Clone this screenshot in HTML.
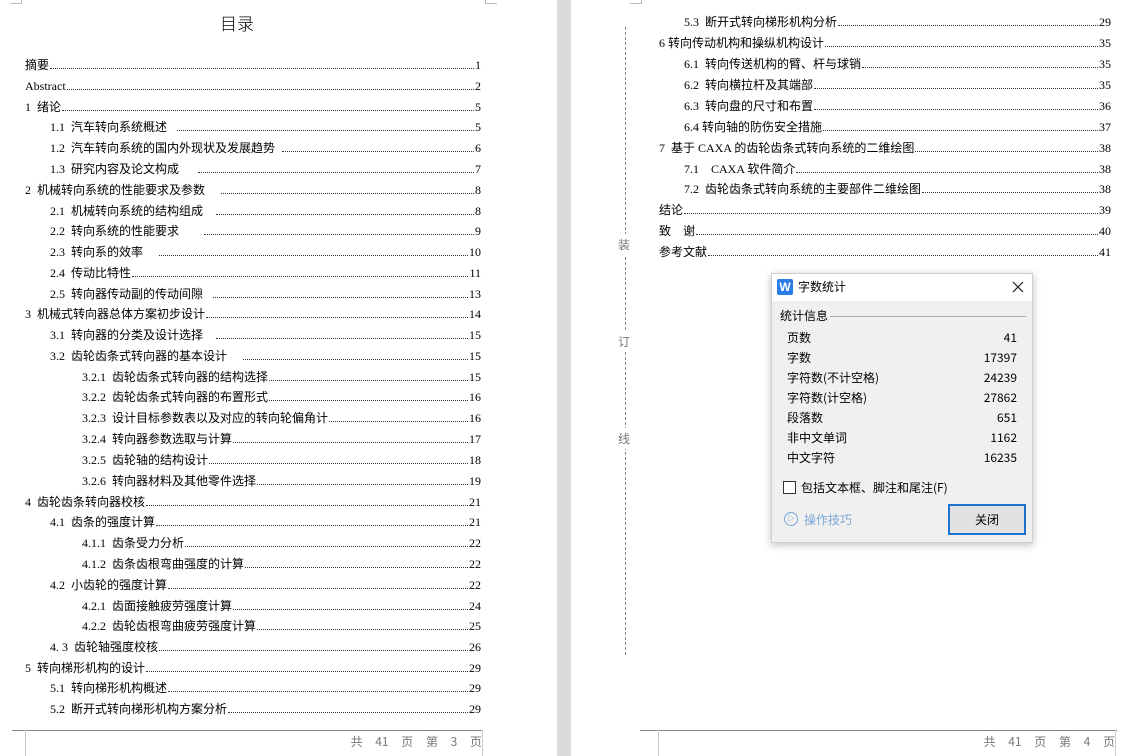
<!DOCTYPE html>
<html><head><meta charset="utf-8"><style>
*{margin:0;padding:0;box-sizing:border-box}
body{width:1131px;height:756px;background:#fff;position:relative;overflow:hidden;font-family:"Liberation Serif","Noto Sans CJK SC",serif;font-size:12px;color:#000}
.gap{position:absolute;left:557px;top:0;width:14px;height:756px;background:#dadbdc}
.r{position:absolute;display:flex;align-items:flex-end;height:16px;line-height:16px;white-space:nowrap}
.r .t{font-family:"Liberation Serif","Noto Sans CJK SC",sans-serif}
.r .d{flex:1;border-bottom:1px dotted #333;margin:0 1px 4px 1px}
.r .n{font-family:"Liberation Serif",serif}
.title{position:absolute;left:220px;top:10px;font-family:"Noto Sans CJK SC",sans-serif;font-size:17px;font-weight:300}
.foot{position:absolute;top:730px;height:1px;background:#888}
.ft{position:absolute;top:733px;font-family:"Noto Sans CJK SC",sans-serif;font-size:12px;color:#777;word-spacing:10px;text-align:right}
.cm{position:absolute;border-color:#bbb;border-style:solid;width:12px;height:5px}
.dash{position:absolute;left:625px;top:27px;height:628px;border-left:1px dashed #888}
.bl{position:absolute;left:618px;font-family:"Noto Sans CJK SC",sans-serif;font-size:12px;color:#777;background:#fff;padding:2px 0}
.dlg{position:absolute;left:771px;top:273px;width:262px;height:270px;background:#f0f0f0;border:1px solid #cfcfcf;box-shadow:0 2px 8px rgba(0,0,0,.25);font-family:"Noto Sans CJK SC",sans-serif;font-size:12px}
.tb{height:27px;background:#fff;position:relative}
.row{position:absolute;left:15px;width:230px;display:flex;justify-content:space-between;font-size:12px;line-height:16px}
</style></head><body>
<div class="gap"></div>
<div class="cm" style="left:10px;top:-1px;border-width:0 1px 1px 0"></div>
<div class="cm" style="left:485px;top:-1px;border-width:0 0 1px 1px"></div>
<div class="cm" style="left:630px;top:-1px;border-width:0 1px 1px 0"></div>
<div class="title">目录</div>

<div class="r" style="left:25px;width:456px;top:57px"><span class="t">摘要</span><span class="d"></span><span class="n">1</span></div>
<div class="r" style="left:25px;width:456px;top:78px"><span class="t">Abstract</span><span class="d"></span><span class="n">2</span></div>
<div class="r" style="left:25px;width:456px;top:99px"><span class="t">1&nbsp; 绪论</span><span class="d"></span><span class="n">5</span></div>
<div class="r" style="left:50px;width:431px;top:119px"><span class="t">1.1&nbsp; 汽车转向系统概述&nbsp;&nbsp;&nbsp;</span><span class="d"></span><span class="n">5</span></div>
<div class="r" style="left:50px;width:431px;top:140px"><span class="t">1.2&nbsp; 汽车转向系统的国内外现状及发展趋势&nbsp;&nbsp;</span><span class="d"></span><span class="n">6</span></div>
<div class="r" style="left:50px;width:431px;top:161px"><span class="t">1.3&nbsp; 研究内容及论文构成&nbsp;&nbsp;&nbsp;&nbsp;&nbsp;&nbsp;</span><span class="d"></span><span class="n">7</span></div>
<div class="r" style="left:25px;width:456px;top:182px"><span class="t">2&nbsp; 机械转向系统的性能要求及参数&nbsp;&nbsp;&nbsp;&nbsp;&nbsp;</span><span class="d"></span><span class="n">8</span></div>
<div class="r" style="left:50px;width:431px;top:203px"><span class="t">2.1&nbsp; 机械转向系统的结构组成&nbsp;&nbsp;&nbsp;&nbsp;</span><span class="d"></span><span class="n">8</span></div>
<div class="r" style="left:50px;width:431px;top:223px"><span class="t">2.2&nbsp; 转向系统的性能要求&nbsp;&nbsp;&nbsp;&nbsp;&nbsp;&nbsp;&nbsp;&nbsp;</span><span class="d"></span><span class="n">9</span></div>
<div class="r" style="left:50px;width:431px;top:244px"><span class="t">2.3&nbsp; 转向系的效率&nbsp;&nbsp;&nbsp;&nbsp;&nbsp;</span><span class="d"></span><span class="n">10</span></div>
<div class="r" style="left:50px;width:431px;top:265px"><span class="t">2.4&nbsp; 传动比特性</span><span class="d"></span><span class="n">11</span></div>
<div class="r" style="left:50px;width:431px;top:286px"><span class="t">2.5&nbsp; 转向器传动副的传动间隙&nbsp;&nbsp;&nbsp;</span><span class="d"></span><span class="n">13</span></div>
<div class="r" style="left:25px;width:456px;top:306px"><span class="t">3&nbsp; 机械式转向器总体方案初步设计</span><span class="d"></span><span class="n">14</span></div>
<div class="r" style="left:50px;width:431px;top:327px"><span class="t">3.1&nbsp; 转向器的分类及设计选择&nbsp;&nbsp;&nbsp;&nbsp;</span><span class="d"></span><span class="n">15</span></div>
<div class="r" style="left:50px;width:431px;top:348px"><span class="t">3.2&nbsp; 齿轮齿条式转向器的基本设计&nbsp;&nbsp;&nbsp;&nbsp;&nbsp;</span><span class="d"></span><span class="n">15</span></div>
<div class="r" style="left:82px;width:399px;top:369px"><span class="t">3.2.1&nbsp; 齿轮齿条式转向器的结构选择</span><span class="d"></span><span class="n">15</span></div>
<div class="r" style="left:82px;width:399px;top:389px"><span class="t">3.2.2&nbsp; 齿轮齿条式转向器的布置形式</span><span class="d"></span><span class="n">16</span></div>
<div class="r" style="left:82px;width:399px;top:410px"><span class="t">3.2.3&nbsp; 设计目标参数表以及对应的转向轮偏角计</span><span class="d"></span><span class="n">16</span></div>
<div class="r" style="left:82px;width:399px;top:431px"><span class="t">3.2.4&nbsp; 转向器参数选取与计算</span><span class="d"></span><span class="n">17</span></div>
<div class="r" style="left:82px;width:399px;top:452px"><span class="t">3.2.5&nbsp; 齿轮轴的结构设计</span><span class="d"></span><span class="n">18</span></div>
<div class="r" style="left:82px;width:399px;top:473px"><span class="t">3.2.6&nbsp; 转向器材料及其他零件选择</span><span class="d"></span><span class="n">19</span></div>
<div class="r" style="left:25px;width:456px;top:494px"><span class="t">4&nbsp; 齿轮齿条转向器校核</span><span class="d"></span><span class="n">21</span></div>
<div class="r" style="left:50px;width:431px;top:514px"><span class="t">4.1&nbsp; 齿条的强度计算</span><span class="d"></span><span class="n">21</span></div>
<div class="r" style="left:82px;width:399px;top:535px"><span class="t">4.1.1&nbsp; 齿条受力分析</span><span class="d"></span><span class="n">22</span></div>
<div class="r" style="left:82px;width:399px;top:556px"><span class="t">4.1.2&nbsp; 齿条齿根弯曲强度的计算</span><span class="d"></span><span class="n">22</span></div>
<div class="r" style="left:50px;width:431px;top:577px"><span class="t">4.2&nbsp; 小齿轮的强度计算</span><span class="d"></span><span class="n">22</span></div>
<div class="r" style="left:82px;width:399px;top:598px"><span class="t">4.2.1&nbsp; 齿面接触疲劳强度计算</span><span class="d"></span><span class="n">24</span></div>
<div class="r" style="left:82px;width:399px;top:618px"><span class="t">4.2.2&nbsp; 齿轮齿根弯曲疲劳强度计算</span><span class="d"></span><span class="n">25</span></div>
<div class="r" style="left:50px;width:431px;top:639px"><span class="t">4. 3&nbsp; 齿轮轴强度校核</span><span class="d"></span><span class="n">26</span></div>
<div class="r" style="left:25px;width:456px;top:660px"><span class="t">5&nbsp; 转向梯形机构的设计</span><span class="d"></span><span class="n">29</span></div>
<div class="r" style="left:50px;width:431px;top:680px"><span class="t">5.1&nbsp; 转向梯形机构概述</span><span class="d"></span><span class="n">29</span></div>
<div class="r" style="left:50px;width:431px;top:701px"><span class="t">5.2&nbsp; 断开式转向梯形机构方案分析</span><span class="d"></span><span class="n">29</span></div>

<div class="foot" style="left:12px;width:470px"></div>
<div style="position:absolute;left:25px;top:730px;width:1px;height:26px;background:#ccc"></div>
<div style="position:absolute;left:482px;top:730px;width:1px;height:26px;background:#ccc"></div>
<div class="ft" style="left:300px;width:182px">共 41 页 第 3 页</div>

<div class="dash"></div>
<div class="bl" style="top:234px">装</div>
<div class="bl" style="top:331px">订</div>
<div class="bl" style="top:428px">线</div>

<div class="r" style="left:684px;width:427px;top:14px"><span class="t">5.3&nbsp; 断开式转向梯形机构分析</span><span class="d"></span><span class="n">29</span></div>
<div class="r" style="left:659px;width:452px;top:35px"><span class="t">6 转向传动机构和操纵机构设计</span><span class="d"></span><span class="n">35</span></div>
<div class="r" style="left:684px;width:427px;top:56px"><span class="t">6.1&nbsp; 转向传送机构的臂、杆与球销</span><span class="d"></span><span class="n">35</span></div>
<div class="r" style="left:684px;width:427px;top:77px"><span class="t">6.2&nbsp; 转向横拉杆及其端部</span><span class="d"></span><span class="n">35</span></div>
<div class="r" style="left:684px;width:427px;top:98px"><span class="t">6.3&nbsp; 转向盘的尺寸和布置</span><span class="d"></span><span class="n">36</span></div>
<div class="r" style="left:684px;width:427px;top:119px"><span class="t">6.4 转向轴的防伤安全措施</span><span class="d"></span><span class="n">37</span></div>
<div class="r" style="left:659px;width:452px;top:140px"><span class="t">7&nbsp; 基于 CAXA 的齿轮齿条式转向系统的二维绘图</span><span class="d"></span><span class="n">38</span></div>
<div class="r" style="left:684px;width:427px;top:161px"><span class="t">7.1&nbsp;&nbsp;&nbsp; CAXA 软件简介</span><span class="d"></span><span class="n">38</span></div>
<div class="r" style="left:684px;width:427px;top:181px"><span class="t">7.2&nbsp; 齿轮齿条式转向系统的主要部件二维绘图</span><span class="d"></span><span class="n">38</span></div>
<div class="r" style="left:659px;width:452px;top:202px"><span class="t">结论</span><span class="d"></span><span class="n">39</span></div>
<div class="r" style="left:659px;width:452px;top:223px"><span class="t">致&nbsp;&nbsp;&nbsp; 谢</span><span class="d"></span><span class="n">40</span></div>
<div class="r" style="left:659px;width:452px;top:244px"><span class="t">参考文献</span><span class="d"></span><span class="n">41</span></div>

<div class="foot" style="left:640px;width:477px"></div>
<div style="position:absolute;left:658px;top:730px;width:1px;height:26px;background:#ccc"></div>
<div style="position:absolute;left:1115px;top:730px;width:1px;height:26px;background:#ccc"></div>
<div class="ft" style="left:933px;width:182px">共 41 页 第 4 页</div>

<div class="dlg">
 <div class="tb">
  <div style="position:absolute;left:5px;top:5px;width:16px;height:16px;background:#2a7ce8;border-radius:2px;color:#fff;font:bold 12px/16px 'Liberation Sans',sans-serif;text-align:center">W</div>
  <div style="position:absolute;left:26px;top:4px">字数统计</div>
  <svg style="position:absolute;left:240px;top:7px" width="12" height="12" viewBox="0 0 12 12"><path d="M1 1L11 11M11 1L1 11" stroke="#222" stroke-width="1.2"/></svg>
 </div>
 <div style="position:absolute;left:8px;top:33px">统计信息</div>
 <div style="position:absolute;left:58px;top:42px;width:196px;height:1px;background:#aaa"></div>
 <div class="row" style="top:56px"><span>页数</span><span>41</span></div>
 <div class="row" style="top:76px"><span>字数</span><span>17397</span></div>
 <div class="row" style="top:96px"><span>字符数(不计空格)</span><span>24239</span></div>
 <div class="row" style="top:116px"><span>字符数(计空格)</span><span>27862</span></div>
 <div class="row" style="top:136px"><span>段落数</span><span>651</span></div>
 <div class="row" style="top:156px"><span>非中文单词</span><span>1162</span></div>
 <div class="row" style="top:176px"><span>中文字符</span><span>16235</span></div>
 <div style="position:absolute;left:11px;top:207px;width:13px;height:13px;border:1px solid #333;background:#fff"></div>
 <div style="position:absolute;left:29px;top:205px">包括文本框、脚注和尾注(F)</div>
 <div style="position:absolute;left:12px;top:238px;width:14px;height:14px;border:1px solid #7aa7d6;border-radius:50%;color:#7aa7d6;font-size:8px;line-height:12px;text-align:center">▷</div>
 <div style="position:absolute;left:32px;top:237px;color:#7aa7d6">操作技巧</div>
 <div style="position:absolute;left:176px;top:230px;width:78px;height:31px;border:2px solid #1c74d0;background:#e1e1e1;text-align:center;line-height:27px">关闭</div>
</div>
</body></html>
